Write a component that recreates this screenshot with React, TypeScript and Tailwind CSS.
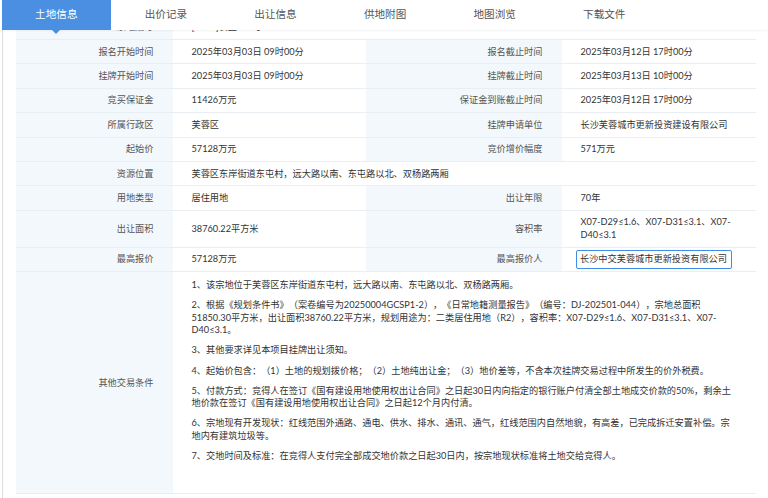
import React from 'react'

const tabs = ['土地信息', '出价记录', '出让信息', '供地附图', '地图浏览', '下载文件']

type Row =
  | { kind: 'pair'; l1: string; v1: string; l2: string; v2: React.ReactNode }
  | { kind: 'span'; l1: string; v1: string }

const rows: Row[] = [
  { kind: 'span', l1: '宗地编号', v1: '[2025]长土049号' },
  { kind: 'pair', l1: '报名开始时间', v1: '2025年03月03日 09时00分', l2: '报名截止时间', v2: '2025年03月12日 17时00分' },
  { kind: 'pair', l1: '挂牌开始时间', v1: '2025年03月03日 09时00分', l2: '挂牌截止时间', v2: '2025年03月13日 10时00分' },
  { kind: 'pair', l1: '竞买保证金', v1: '11426万元', l2: '保证金到账截止时间', v2: '2025年03月12日 17时00分' },
  { kind: 'pair', l1: '所属行政区', v1: '芙蓉区', l2: '挂牌申请单位', v2: '长沙芙蓉城市更新投资建设有限公司' },
  { kind: 'pair', l1: '起始价', v1: '57128万元', l2: '竞价增价幅度', v2: '571万元' },
  { kind: 'span', l1: '资源位置', v1: '芙蓉区东岸街道东屯村，远大路以南、东屯路以北、双杨路两厢' },
  { kind: 'pair', l1: '用地类型', v1: '居住用地', l2: '出让年限', v2: '70年' },
  { kind: 'pair', l1: '出让面积', v1: '38760.22平方米', l2: '容积率', v2: 'X07-D29≤1.6、X07-D31≤3.1、X07-D40≤3.1' },
  {
    kind: 'pair',
    l1: '最高报价',
    v1: '57128万元',
    l2: '最高报价人',
    v2: (
      <span className="-my-[4px] -ml-[5px] inline-block rounded-[2px] border-[1.5px] border-[#3d8ee8] px-[3.5px] py-[2.5px]">
        长沙中交芙蓉城市更新投资有限公司
      </span>
    ),
  },
]

const conditions = [
  '1、该宗地位于芙蓉区东岸街道东屯村，远大路以南、东屯路以北、双杨路两厢。',
  '2、根据《规划条件书》（案卷编号为20250004GCSP1-2），《日常地籍测量报告》（编号：DJ-202501-044），宗地总面积51850.30平方米，出让面积38760.22平方米，规划用途为：二类居住用地（R2），容积率：X07-D29≤1.6、X07-D31≤3.1、X07-D40≤3.1。',
  '3、其他要求详见本项目挂牌出让须知。',
  '4、起始价包含：（1）土地的规划拨价格；（2）土地纯出让金；（3）地价差等，不含本次挂牌交易过程中所发生的价外税费。',
  '5、付款方式：竞得人在签订《国有建设用地使用权出让合同》之日起30日内向指定的银行账户付清全部土地成交价款的50%，剩余土地价款在签订《国有建设用地使用权出让合同》之日起12个月内付清。',
  '6、宗地现有开发现状：红线范围外通路、通电、供水、排水、通讯、通气，红线范围内自然地貌，有高差，已完成拆迁安置补偿。宗地内有建筑垃圾等。',
  '7、交地时间及标准：在竞得人支付完全部成交地价款之日起30日内，按宗地现状标准将土地交给竞得人。',
]

const labelCls =
  'flex items-center justify-end border-b border-[#e9eef3] bg-[#f3f8fd] py-[5.5px] pr-[19px] text-right text-[#555]'
const valueCls = 'flex items-center border-b border-[#e9eef3] bg-white py-[5.5px] pl-[19px] pr-[12px] text-[#333]'

export default function App() {
  return (
    <div className="relative h-[498px] w-[768px] overflow-hidden bg-white font-['Lato','Noto_Sans_CJK_SC',sans-serif] [text-spacing-trim:space-all]">
      {/* Tabs */}
      <div className="relative z-10 flex h-[30px] bg-white pl-[1.5px] shadow-[0_1px_2px_rgba(0,0,0,0.05)]">
        {tabs.map((t, i) => (
          <div
            key={t}
            className={`relative flex w-[109.6px] items-center justify-center text-[10.6px] ${
              i === 0 ? 'bg-[#4a8fe1] text-white' : 'text-[#555]'
            }`}
          >
            {t}
            {i === 0 && (
              <span className="absolute left-1/2 top-full -ml-[4px] h-0 w-0 border-l-[4px] border-r-[4px] border-t-[4px] border-l-transparent border-r-transparent border-t-[#4a8fe1]" />
            )}
          </div>
        ))}
      </div>

      {/* Table */}
      <div className="-mt-[14.4px] ml-[1.5px] h-[600px] border-l border-[#dedede] pl-[13px]">
        <div className="grid w-[740px] grid-cols-[157px_193px_196px_194px] border-r border-[#eef1f4] text-[9.2px] leading-[12.4px]">
          {rows.map((r, i) =>
            r.kind === 'span' ? (
              <React.Fragment key={i}>
                <div className={labelCls}>{r.l1}</div>
                <div className={`${valueCls} col-span-3`}>{r.v1}</div>
              </React.Fragment>
            ) : (
              <React.Fragment key={i}>
                <div className={labelCls}>{r.l1}</div>
                <div className={valueCls}>{r.v1}</div>
                <div className={labelCls}>{r.l2}</div>
                <div className={valueCls}>{r.v2}</div>
              </React.Fragment>
            )
          )}
          <div className={labelCls}>其他交易条件</div>
          <div className="col-span-3 border-b border-[#e9eef3] bg-white pb-[31px] pl-[19px] pr-[21px] pt-[7px] text-[#333]">
            {conditions.map((c, i) => (
              <p key={i} className={i < conditions.length - 1 ? 'mb-[7.8px]' : ''}>
                {c}
              </p>
            ))}
          </div>
        </div>
      </div>
    </div>
  )
}
